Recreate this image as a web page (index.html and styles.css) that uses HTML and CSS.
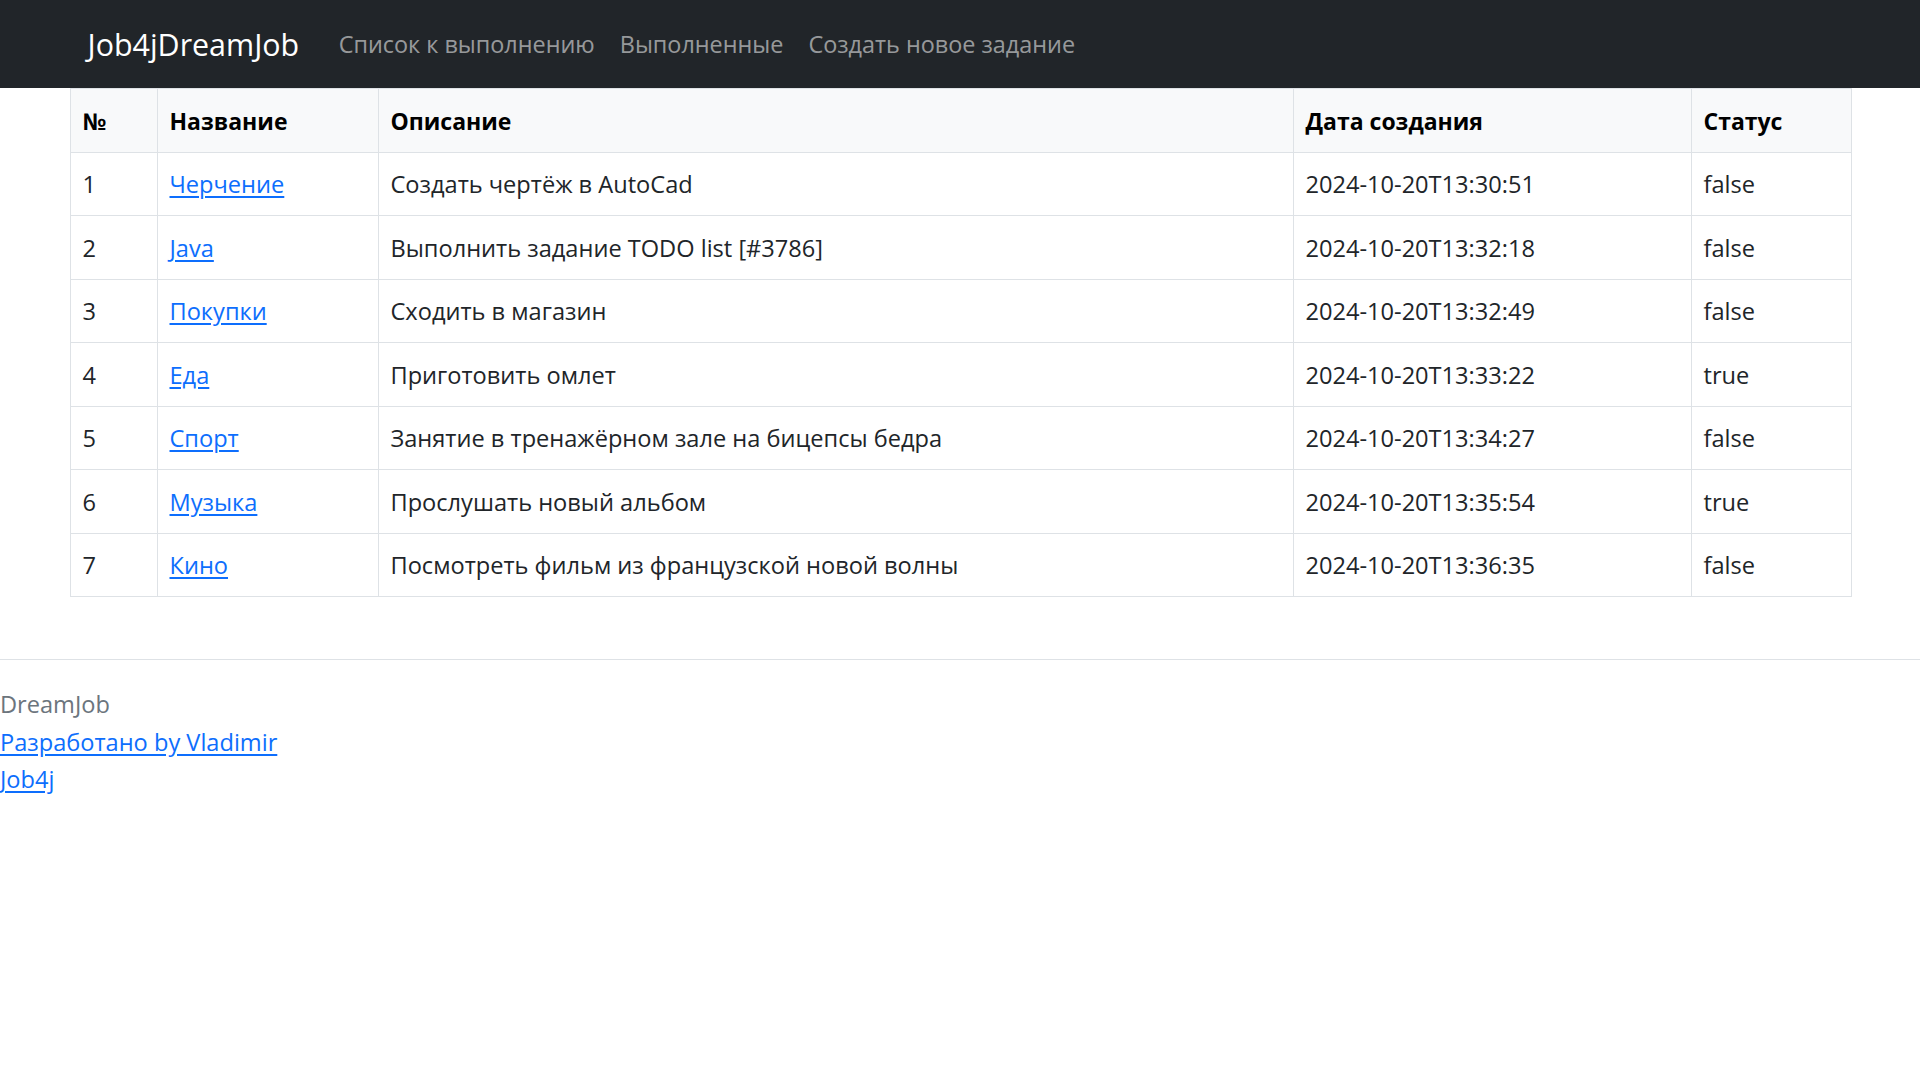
FILE: index.html
```html
<!DOCTYPE html>
<html lang="ru">
<head>
<meta charset="utf-8">
<title>Job4jDreamJob</title>
<link rel="stylesheet" href="styles.css">
</head>
<body>
<nav class="navbar">
  <div class="container nav-inner">
    <a class="brand" href="#">Job4jDreamJob</a>
    <a class="nav-link" href="#">Список к выполнению</a>
    <a class="nav-link" href="#">Выполненные</a>
    <a class="nav-link" href="#">Создать новое задание</a>
  </div>
</nav>
<main class="container">
  <table class="tasks">
    <colgroup>
      <col class="c-num"><col class="c-name"><col class="c-desc"><col class="c-date"><col class="c-status">
    </colgroup>
    <thead>
      <tr><th>№</th><th>Название</th><th>Описание</th><th>Дата создания</th><th>Статус</th></tr>
    </thead>
    <tbody>
      <tr><td>1</td><td><a href="#">Черчение</a></td><td>Создать чертёж в AutoCad</td><td>2024-10-20T13:30:51</td><td>false</td></tr>
      <tr><td>2</td><td><a href="#">Java</a></td><td>Выполнить задание TODO list [#3786]</td><td>2024-10-20T13:32:18</td><td>false</td></tr>
      <tr><td>3</td><td><a href="#">Покупки</a></td><td>Сходить в магазин</td><td>2024-10-20T13:32:49</td><td>false</td></tr>
      <tr><td>4</td><td><a href="#">Еда</a></td><td>Приготовить омлет</td><td>2024-10-20T13:33:22</td><td>true</td></tr>
      <tr><td>5</td><td><a href="#">Спорт</a></td><td>Занятие в тренажёрном зале на бицепсы бедра</td><td>2024-10-20T13:34:27</td><td>false</td></tr>
      <tr><td>6</td><td><a href="#">Музыка</a></td><td>Прослушать новый альбом</td><td>2024-10-20T13:35:54</td><td>true</td></tr>
      <tr><td>7</td><td><a href="#">Кино</a></td><td>Посмотреть фильм из французской новой волны</td><td>2024-10-20T13:36:35</td><td>false</td></tr>
    </tbody>
  </table>
</main>
<footer class="footer">
  <div class="muted">DreamJob</div>
  <div><a href="#">Разработано by Vladimir</a></div>
  <div><a href="#">Job4j</a></div>
</footer>
</body>
</html>
```
FILE: styles.css
```css
* { box-sizing: border-box; }
html, body {
  margin: 0;
  padding: 0;
}
body {
  font-family: "Open Sans", "Noto Sans", sans-serif;
  font-size: 23.6px;
  line-height: 37.5px;
  color: #212529;
  background: #fff;
}
a { color: #0d6efd; text-decoration: underline; text-underline-offset: 3px; }

.container {
  width: 1781px;
  margin: 0 auto;
}

.navbar {
  background: #212529;
  height: 88px;
  display: flex;
  align-items: center;
}
.nav-inner {
  display: flex;
  align-items: center;
  padding: 2px 18px 0;
}
.brand {
  color: #fff;
  text-decoration: none;
  font-size: 30.4px;
  margin-right: 27px;
}
.nav-link {
  color: rgba(255, 255, 255, 0.55);
  text-decoration: none;
  font-size: 23.4px;
  padding: 0 12.5px;
}

.tasks {
  width: 100%;
  border-collapse: collapse;
  table-layout: fixed;
  margin-bottom: 25px;
}
.c-num { width: 87px; }
.c-name { width: 221px; }
.c-desc { width: 915px; }
.c-date { width: 398px; }
.c-status { width: 160px; }

.tasks th, .tasks td {
  border: 1px solid #dee2e6;
  padding: 13.5px 12px 11.5px;
  text-align: left;
  vertical-align: top;
  height: 63.5px;
}
.tasks thead th {
  background: #f8f9fa;
  color: #000;
  font-weight: 700;
  font-size: 23px;
}

.footer {
  margin-top: 62px;
  border-top: 1px solid #dee2e6;
  padding-top: 26px;
}
.muted { color: #6c757d; }
```
